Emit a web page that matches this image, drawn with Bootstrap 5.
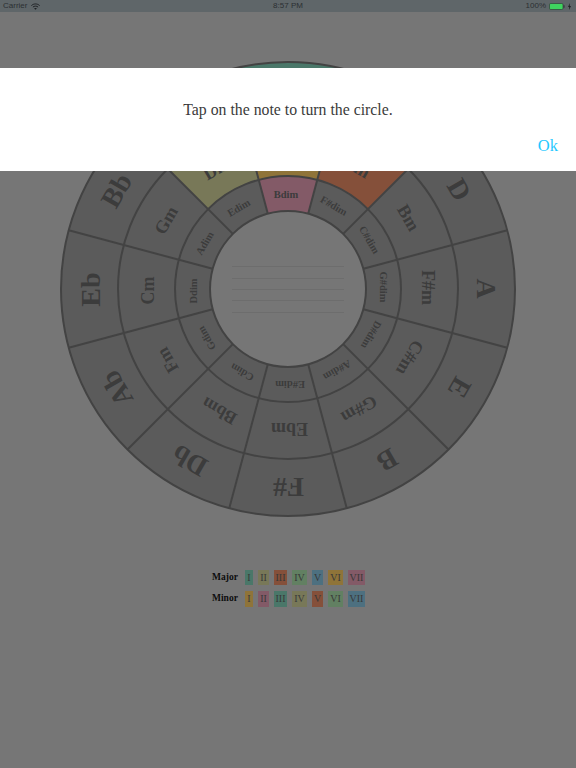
<!DOCTYPE html>
<html lang="en">
<head>
<meta charset="utf-8">
<title>Circle of fifths</title>
<link href="https://cdn.jsdelivr.net/npm/bootstrap@5.3.0/dist/css/bootstrap.min.css" rel="stylesheet">
<style>
html,body{margin:0;height:768px;overflow:hidden;background:#767676;font-family:"Liberation Serif",serif}
.stage{position:relative;height:768px}
.statusbar{height:12px;background:#5f6669;color:#2c3033;font:8px/12px "Liberation Sans",sans-serif;padding:0 5px 0 3px}
.statusbar .clock{position:absolute;left:0;right:0;text-align:center}
.wheel{display:block;width:576px;height:540px}
.seg{fill:#5b5b5b}
.rings circle{fill:none;stroke:#434343;stroke-width:2}
.rings .hole{fill:#767676}
.ray{stroke:#434343;stroke-width:2}
.staff line{stroke:#6d6d6d;stroke-width:1}
.wheel text{font-family:"Liberation Serif",serif;font-weight:700;fill:#3c3c3c;text-anchor:middle;dominant-baseline:central}
.t1{font-size:28px}.t2{font-size:18px}.t3{font-size:10.5px}
.c1{fill:#4a7769;background:#4a7769}.c2{fill:#787858;background:#787858}.c3{fill:#85503a;background:#85503a}
.c4{fill:#628062;background:#628062}.c5{fill:#4d7080;background:#4d7080}.c6{fill:#8f7439;background:#8f7439}.c7{fill:#835a67;background:#835a67}
.legend{display:grid;width:max-content;margin:17.5px auto 0 212px;grid-template-columns:28px 8px 11px 13px 15px 11px 15px 17px;column-gap:5px;row-gap:6px;grid-auto-rows:15.5px;font-size:10px;line-height:15.5px;text-align:center;color:#383838}
.legend b{text-align:left;color:#0d0d0d;font-size:9.5px}
.banner{position:absolute;left:0;right:0;top:68px;height:103px;background:#fff}
.banner-msg{font-size:15.8px;line-height:20px;color:#3a3a3a;text-align:center;padding-top:32px}
.banner-ok{font-size:16.5px;line-height:20px;color:#1ec8ff;text-align:right;padding:16px 18px 0 0;text-decoration:none;display:block}
</style>
</head>
<body>
<div class="stage">
  <div class="statusbar d-flex align-items-center justify-content-between">
    <span class="clock">8:57 PM</span>
    <span class="d-flex align-items-center gap-1">Carrier
      <svg width="9" height="7" viewBox="0 0 9 7" fill="none" stroke="#1f2225" stroke-width="1"><path d="M.4 2.6C2.6.4 6.4.4 8.6 2.6"/><path d="M1.9 4.1C3.3 2.8 5.7 2.8 7.1 4.1"/><path d="M4.5 6.8 3.2 5.4C3.9 4.8 5.1 4.8 5.8 5.4Z" fill="#1f2225" stroke="none"/></svg>
    </span>
    <span class="d-flex align-items-center" style="gap:3px">100%
      <svg width="16" height="7" viewBox="0 0 16 7"><rect x=".5" y=".5" width="13.5" height="6" rx="1.2" fill="#3fd45f" stroke="#2c3033" stroke-width=".6"/><rect x="14.5" y="2.3" width="1" height="2.4" fill="#2c3033"/></svg>
      <svg width="3" height="7" viewBox="0 0 3 7"><path d="M2 0 0 4h1.2L1 7l2-4H1.7Z" fill="#1f2225"/></svg>
    </span>
  </div>

  <svg class="wheel" viewBox="0 12 576 540" xmlns="http://www.w3.org/2000/svg">
    <defs>
      <path id="sOuter" d="M229.25,69.73A227 227 0 0 1 346.75,69.73L332,124.8A170 170 0 0 0 244,124.8Z"/>
      <path id="sMid" d="M244,124.8A170 170 0 0 1 332,124.8L317.25,179.85A113 113 0 0 0 258.75,179.85Z"/>
      <path id="sInner" d="M258.75,179.85A113 113 0 0 1 317.25,179.85L308.19,213.66A78 78 0 0 0 267.81,213.66Z"/>
      <line id="ray" class="ray" x1="288" y1="62" x2="288" y2="211"/>
    </defs>
    <circle class="seg" cx="288" cy="289" r="227"/>
    <use href="#sOuter" class="c1"/>
    <use href="#sOuter" class="c5" transform="rotate(30 288 289)"/>
    <use href="#sOuter" class="c4" transform="rotate(330 288 289)"/>
    <use href="#sMid" class="c6"/>
    <use href="#sMid" class="c3" transform="rotate(30 288 289)"/>
    <use href="#sMid" class="c2" transform="rotate(330 288 289)"/>
    <use href="#sInner" class="c7"/>
    <g class="rings">
      <circle cx="288" cy="289" r="227"/>
      <circle cx="288" cy="289" r="170"/>
      <circle cx="288" cy="289" r="113"/>
      <circle class="hole" cx="288" cy="289" r="78"/>
      <use href="#ray" transform="rotate(15 288 289)"/><use href="#ray" transform="rotate(45 288 289)"/>
      <use href="#ray" transform="rotate(75 288 289)"/><use href="#ray" transform="rotate(105 288 289)"/>
      <use href="#ray" transform="rotate(135 288 289)"/><use href="#ray" transform="rotate(165 288 289)"/>
      <use href="#ray" transform="rotate(195 288 289)"/><use href="#ray" transform="rotate(225 288 289)"/>
      <use href="#ray" transform="rotate(255 288 289)"/><use href="#ray" transform="rotate(285 288 289)"/>
      <use href="#ray" transform="rotate(315 288 289)"/><use href="#ray" transform="rotate(345 288 289)"/>
    </g>
    <g class="staff">
      <line x1="232" x2="344" y1="266.5" y2="266.5"/><line x1="232" x2="344" y1="278.5" y2="278.5"/>
      <line x1="232" x2="344" y1="289.5" y2="289.5"/><line x1="232" x2="344" y1="300.5" y2="300.5"/>
      <line x1="232" x2="344" y1="312.5" y2="312.5"/>
    </g>
    <g class="t1">
      <text x="287.5" y="91" transform="rotate(0 288 289)">C</text>
      <text x="287.5" y="91" transform="rotate(30 288 289)">G</text>
      <text x="287.5" y="91" transform="rotate(60 288 289)">D</text>
      <text x="287.5" y="91" transform="rotate(90 288 289)">A</text>
      <text x="287.5" y="91" transform="rotate(120 288 289)">E</text>
      <text x="287.5" y="91" transform="rotate(150 288 289)">B</text>
      <text x="287.5" y="91" transform="rotate(180 288 289)">F#</text>
      <text x="287.5" y="91" transform="rotate(210 288 289)">Db</text>
      <text x="287.5" y="91" transform="rotate(240 288 289)">Ab</text>
      <text x="287.5" y="91" transform="rotate(270 288 289)">Eb</text>
      <text x="287.5" y="91" transform="rotate(300 288 289)">Bb</text>
      <text x="287.5" y="91" transform="rotate(330 288 289)">F</text>
    </g>
    <g class="t2">
      <text x="286.5" y="149" transform="rotate(0 288 289)">Am</text>
      <text x="286.5" y="149" transform="rotate(30 288 289)">Em</text>
      <text x="286.5" y="149" transform="rotate(60 288 289)">Bm</text>
      <text x="286.5" y="149" transform="rotate(90 288 289)">F#m</text>
      <text x="286.5" y="149" transform="rotate(120 288 289)">C#m</text>
      <text x="286.5" y="149" transform="rotate(150 288 289)">G#m</text>
      <text x="286.5" y="149" transform="rotate(180 288 289)">Ebm</text>
      <text x="286.5" y="149" transform="rotate(210 288 289)">Bbm</text>
      <text x="286.5" y="149" transform="rotate(240 288 289)">Fm</text>
      <text x="286.5" y="149" transform="rotate(270 288 289)">Cm</text>
      <text x="286.5" y="149" transform="rotate(300 288 289)">Gm</text>
      <text x="286.5" y="149" transform="rotate(330 288 289)">Dm</text>
    </g>
    <g class="t3">
      <text x="286" y="194" transform="rotate(0 288 289)">Bdim</text>
      <text x="286" y="194" transform="rotate(30 288 289)">F#dim</text>
      <text x="286" y="194" transform="rotate(60 288 289)">C#dim</text>
      <text x="286" y="194" transform="rotate(90 288 289)">G#dim</text>
      <text x="286" y="194" transform="rotate(120 288 289)">D#dim</text>
      <text x="286" y="194" transform="rotate(150 288 289)">A#dim</text>
      <text x="286" y="194" transform="rotate(180 288 289)">E#dim</text>
      <text x="286" y="194" transform="rotate(210 288 289)">Cdim</text>
      <text x="286" y="194" transform="rotate(240 288 289)">Gdim</text>
      <text x="286" y="194" transform="rotate(270 288 289)">Ddim</text>
      <text x="286" y="194" transform="rotate(300 288 289)">Adim</text>
      <text x="286" y="194" transform="rotate(330 288 289)">Edim</text>
    </g>
  </svg>

  <div class="legend">
    <b>Major</b><span class="c1">I</span><span class="c2">II</span><span class="c3">III</span><span class="c4">IV</span><span class="c5">V</span><span class="c6">VI</span><span class="c7">VII</span>
    <b>Minor</b><span class="c6">I</span><span class="c7">II</span><span class="c1">III</span><span class="c2">IV</span><span class="c3">V</span><span class="c4">VI</span><span class="c5">VII</span>
  </div>

  <div class="banner">
    <div class="banner-msg">Tap on the note to turn the circle.</div>
    <a class="banner-ok" href="#">Ok</a>
  </div>
</div>
<script src="https://cdn.jsdelivr.net/npm/bootstrap@5.3.0/dist/js/bootstrap.bundle.min.js"></script>
</body>
</html>
